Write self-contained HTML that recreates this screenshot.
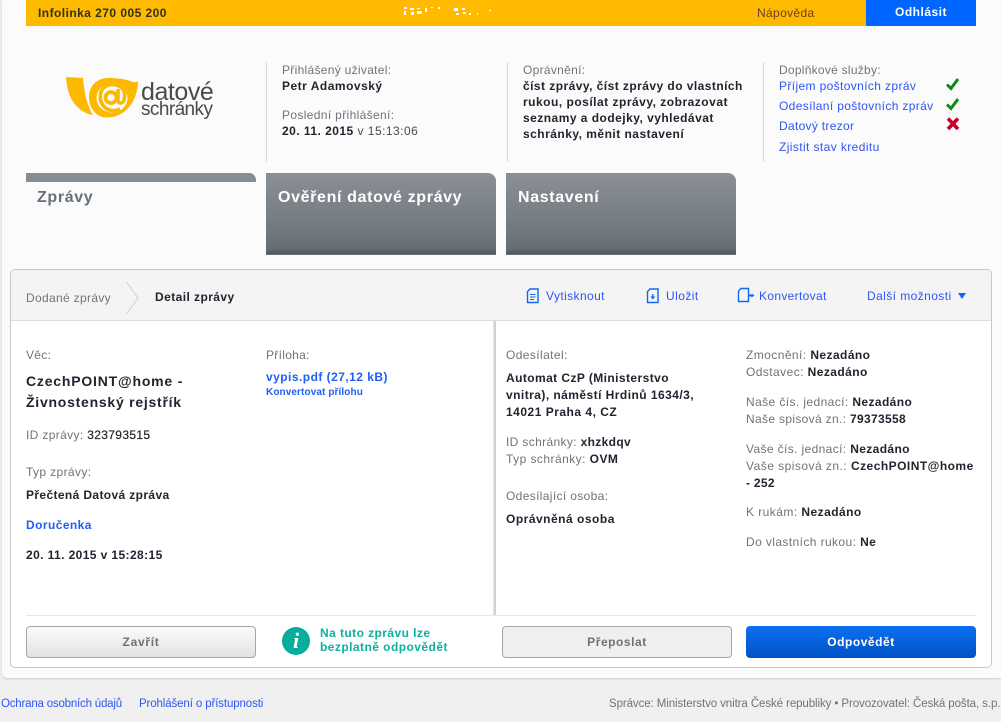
<!DOCTYPE html>
<html lang="cs"><head><meta charset="utf-8"><title>Datové schránky</title>
<style>
html,body{margin:0;padding:0;width:1001px;height:722px;overflow:hidden;background:#f0f0f0;font-family:"Liberation Sans",Arial,sans-serif;font-size:12px;color:#23232f}
#sheet{position:absolute;left:2px;top:0;width:999px;height:678px;background:#fbfbfb;box-shadow:0 1px 2px #ccc;border-radius:0 0 0 5px}
.a{position:absolute}
.t{position:absolute;white-space:nowrap;line-height:16px;height:16px}
.g{color:#6d747c}
.b{font-weight:bold;color:#23232f}
.l{color:#2f55f5}
.lb{color:#1f5ff5;font-weight:bold}
.tab{position:absolute;top:173px;width:230px;height:82px;border-radius:0 8px 0 0;background:linear-gradient(#8b9096,#6f767d 75%,#666d74 92%,#50565c 99%,#9a9ea2);color:#fff;font-weight:bold;font-size:16px;letter-spacing:.64px}
.tab span{position:absolute;left:12px;top:17px;line-height:16px;white-space:nowrap}
.btn{position:absolute;top:626px;width:228px;height:30px;border:1px solid #a5a5a9;border-radius:4px;text-align:center;line-height:30px;font-weight:bold;color:#6f7178;letter-spacing:.55px}
</style></head><body>
<div id="sheet"></div>

<div class="a" style="left:26px;top:0;width:840px;height:26px;background:#ffba00"></div>
<div class="a" style="left:866px;top:0;width:110px;height:26px;background:#0066ff;color:#fff;font-weight:bold;text-align:center;line-height:25px;letter-spacing:.5px">Odhlásit</div>
<div class="t" style="left:38px;top:5px;font-weight:bold;color:#2b3320;letter-spacing:.45px">Infolinka 270 005 200</div>
<div class="t" style="left:757px;top:5px;color:#6b3d20;letter-spacing:.35px">Nápověda</div>
<svg class="a" style="left:403px;top:6px" width="90" height="12" fill="#fff"><rect x="1" y="1" width="3" height="2"/><rect x="1" y="5" width="2" height="4"/><rect x="7" y="2" width="4" height="2"/><rect x="8" y="6" width="3" height="3"/><rect x="14" y="2" width="3" height="1"/><rect x="14" y="5" width="5" height="3"/><rect x="22" y="2" width="2" height="4"/><rect x="28" y="1" width="2" height="1"/><rect x="35" y="1" width="2" height="2"/><rect x="51" y="2" width="4" height="3"/><rect x="53" y="7" width="3" height="2"/><rect x="59" y="2" width="3" height="2"/><rect x="60" y="6" width="3" height="2"/><rect x="66" y="7" width="2" height="2"/><rect x="74" y="7" width="1" height="2"/><rect x="86" y="4" width="2" height="1"/></svg>

<!-- logo -->
<svg class="a" style="left:60px;top:70px" width="90" height="55" viewBox="60 70 90 55" fill="none">
<path d="M66 77L83 78C84 92 87 105 93 115C76 112 67 97 66 77Z" fill="#fcb900"/>
<path d="M130.500 81C133 83 138 82 138 81C138 100 126 117.500 107 117.500C96 117.500 89 108 89 97C89 86 97 78 108 78C117 78 124 79 130.500 81Z" fill="#fcb900"/>
<ellipse cx="112" cy="98" rx="15.500" ry="14.500" fill="#fbfbfb"/>
<circle cx="111" cy="97.500" r="5.500" stroke="#fcb900" stroke-width="3.800"/>
<path d="M118 89V100.500C118 104 123 104 124 100C126 92 123.500 87.500 118 85.500C110 82.500 102 86 100.500 94C99 103 105 110.500 113 110.500C116 110.500 118 110 120 109" stroke="#fcb900" stroke-width="3.600"/>
</svg>
<div class="t" style="left:141px;top:78px;font-size:25px;line-height:28px;height:28px;color:#4b4b4d;letter-spacing:-.45px">datové</div>
<div class="t" style="left:141px;top:99px;font-size:19px;line-height:22px;height:22px;color:#4b4b4d;letter-spacing:-.58px">schránky</div>

<!-- header dividers -->
<div class="a" style="left:266px;top:62px;width:1px;height:100px;background:#d8d8d8"></div>
<div class="a" style="left:507px;top:62px;width:1px;height:100px;background:#d8d8d8"></div>
<div class="a" style="left:763px;top:62px;width:1px;height:100px;background:#d8d8d8"></div>

<div class="t g" style="left:282px;top:62px;letter-spacing:.3px">Přihlášený uživatel:</div>
<div class="t b" style="left:282px;top:78px;letter-spacing:.5px">Petr Adamovský</div>
<div class="t g" style="left:282px;top:107px;letter-spacing:.35px">Poslední přihlášení:</div>
<div class="t" style="left:282px;top:123px;letter-spacing:.47px"><b>20. 11. 2015</b> <span style="color:#444b55">v 15:13:06</span></div>

<div class="t g" style="left:523px;top:62px;letter-spacing:.3px">Oprávnění:</div>
<div class="t b" style="left:523px;top:78px;letter-spacing:.45px">číst zprávy, číst zprávy do vlastních</div>
<div class="t b" style="left:523px;top:94px;letter-spacing:.5px">rukou, posílat zprávy, zobrazovat</div>
<div class="t b" style="left:523px;top:110px;letter-spacing:.47px">seznamy a dodejky, vyhledávat</div>
<div class="t b" style="left:523px;top:126px;letter-spacing:.48px">schránky, měnit nastavení</div>

<div class="t g" style="left:779px;top:62px;letter-spacing:.26px">Doplňkové služby:</div>
<div class="t l" style="left:779px;top:78px;letter-spacing:.37px">Příjem poštovních zpráv</div>
<div class="t l" style="left:779px;top:98px;letter-spacing:.35px">Odesílaní poštovních zpráv</div>
<div class="t l" style="left:779px;top:118px;letter-spacing:.3px">Datový trezor</div>
<div class="t l" style="left:779px;top:139px;letter-spacing:.4px">Zjistit stav kreditu</div>
<svg class="a" style="left:945px;top:77px" width="16" height="14"><path d="M2 7.500L6 11.500L13 2" fill="none" stroke="#0a8a12" stroke-width="3"/></svg>
<svg class="a" style="left:945px;top:97px" width="16" height="14"><path d="M2 7.500L6 11.500L13 2" fill="none" stroke="#0a8a12" stroke-width="3"/></svg>
<svg class="a" style="left:946px;top:117px" width="14" height="14"><path d="M2 1.500L12 12M12 1.500L2 12" fill="none" stroke="#c8002e" stroke-width="3.600"/></svg>

<!-- tabs -->
<div class="a" style="left:26px;top:173px;width:230px;height:9px;border-radius:0 7px 0 0;background:#878c92"></div>
<div class="t" style="left:37px;top:190px;font-size:16px;font-weight:bold;color:#68707c;letter-spacing:.64px">Zprávy</div>
<div class="tab" style="left:266px"><span>Ověření datové zprávy</span></div>
<div class="tab" style="left:506px"><span>Nastavení</span></div>

<!-- panel -->
<div class="a" style="left:10px;top:269px;width:980px;height:397px;border:1px solid #c8c8c8;border-radius:5px;background:#fff;overflow:hidden">
  <div class="a" style="left:0;top:0;width:980px;height:50px;background:#f4f4f4;border-bottom:1px solid #dedede"></div>
  <div class="a" style="left:482px;top:51px;width:3px;height:295px;background:linear-gradient(90deg,#e8e8e8,#c9c9c9)"></div>
  <div class="a" style="left:15px;top:345px;width:950px;height:1px;background:#e8e8e8"></div>
</div>
<svg class="a" style="left:125px;top:281px" width="16" height="34"><path d="M1.500 1L13 17L1.500 33" fill="none" stroke="#cfcfcf"/></svg>

<div class="t g" style="left:26px;top:290px;letter-spacing:.33px">Dodané zprávy</div>
<div class="t b" style="left:155px;top:289px;letter-spacing:.43px">Detail zprávy</div>

<svg class="a" style="left:526px;top:288px" width="14" height="16" fill="none" stroke="#1467f0" stroke-width="1.400"><path d="M4 1H12V14.500H1.500V3.500Z"/><path d="M4 6.500H9.500M4 9H9.500M4 11.500H8" stroke-width="1"/></svg>
<div class="t l" style="left:546px;top:288px;letter-spacing:.4px">Vytisknout</div>
<svg class="a" style="left:646px;top:288px" width="14" height="16" fill="none" stroke="#1467f0" stroke-width="1.400"><path d="M4 1H12V14.500H1.500V3.500Z"/><path d="M6.800 6V10M5 8.500L6.800 10.500L8.600 8.500" stroke-width="1.300"/></svg>
<div class="t l" style="left:666px;top:288px;letter-spacing:.45px">Uložit</div>
<svg class="a" style="left:737px;top:287px" width="18" height="16" fill="none" stroke="#1467f0" stroke-width="1.400"><path d="M4 1.500H11.500V14.500H1.500V4Z"/><path d="M11.500 8.500H15" stroke-width="2"/><path d="M14.500 6.500L17.500 8.500L14.500 10.500Z" fill="#1467f0" stroke="none"/></svg>
<div class="t l" style="left:759px;top:288px;letter-spacing:.33px">Konvertovat</div>
<div class="t l" style="left:867px;top:288px;letter-spacing:.42px">Další možnosti</div>
<svg class="a" style="left:957px;top:292px" width="10" height="8"><path d="M1 1H9L5 7Z" fill="#1467f0"/></svg>

<!-- left col -->
<div class="t g" style="left:26px;top:347px;letter-spacing:.3px">Věc:</div>
<div class="t b" style="left:26px;top:373px;font-size:14px;letter-spacing:.8px">CzechPOINT@home -</div>
<div class="t b" style="left:26px;top:394px;font-size:14px;letter-spacing:.75px">Živnostenský rejstřík</div>
<div class="t g" style="left:26px;top:427px;letter-spacing:.35px">ID zprávy: <span style="color:#23232f;font-weight:normal;-webkit-text-stroke:.2px #23232f">323793515</span></div>
<div class="t g" style="left:26px;top:464px;letter-spacing:.37px">Typ zprávy:</div>
<div class="t b" style="left:26px;top:487px;letter-spacing:.37px">Přečtená Datová zpráva</div>
<div class="t lb" style="left:26px;top:517px;letter-spacing:.43px">Doručenka</div>
<div class="t b" style="left:26px;top:547px;letter-spacing:.4px">20. 11. 2015 v 15:28:15</div>

<div class="t g" style="left:266px;top:347px;letter-spacing:.3px">Příloha:</div>
<div class="t lb" style="left:266px;top:369px;letter-spacing:.46px">vypis.pdf (27,12 kB)</div>
<div class="t lb" style="left:266px;top:385px;font-size:10px;letter-spacing:.1px">Konvertovat přílohu</div>

<!-- middle col -->
<div class="t g" style="left:506px;top:347px;letter-spacing:.4px">Odesílatel:</div>
<div class="t b" style="left:506px;top:370px;letter-spacing:.42px">Automat CzP (Ministerstvo</div>
<div class="t b" style="left:506px;top:387px;letter-spacing:.45px">vnitra), náměstí Hrdinů 1634/3,</div>
<div class="t b" style="left:506px;top:404px;letter-spacing:.5px">14021 Praha 4, CZ</div>
<div class="t g" style="left:506px;top:434px;letter-spacing:.35px">ID schránky: <b class="b">xhzkdqv</b></div>
<div class="t g" style="left:506px;top:451px;letter-spacing:.45px">Typ schránky: <b class="b">OVM</b></div>
<div class="t g" style="left:506px;top:488px;letter-spacing:.35px">Odesílající osoba:</div>
<div class="t b" style="left:506px;top:511px;letter-spacing:.5px">Oprávněná osoba</div>

<!-- right col -->
<div class="t g" style="left:746px;top:347px;letter-spacing:.43px">Zmocnění: <b class="b">Nezadáno</b></div>
<div class="t g" style="left:746px;top:364px;letter-spacing:.43px">Odstavec: <b class="b">Nezadáno</b></div>
<div class="t g" style="left:746px;top:394px;letter-spacing:.4px">Naše čís. jednací: <b class="b">Nezadáno</b></div>
<div class="t g" style="left:746px;top:411px;letter-spacing:.33px">Naše spisová zn.: <b class="b">79373558</b></div>
<div class="t g" style="left:746px;top:441px;letter-spacing:.37px">Vaše čís. jednací: <b class="b">Nezadáno</b></div>
<div class="t g" style="left:746px;top:458px;letter-spacing:.47px">Vaše spisová zn.: <b class="b">CzechPOINT@home</b></div>
<div class="t b" style="left:746px;top:475px;letter-spacing:.3px">- 252</div>
<div class="t g" style="left:746px;top:504px;letter-spacing:.45px">K rukám: <b class="b">Nezadáno</b></div>
<div class="t g" style="left:746px;top:534px;letter-spacing:.4px">Do vlastních rukou: <b class="b">Ne</b></div>

<!-- buttons -->
<div class="btn" style="left:26px;background:linear-gradient(#fbfbfb,#e3e3e3);letter-spacing:.7px">Zavřít</div>
<div class="a" style="left:282px;top:627px;width:28px;height:28px;border-radius:50%;background:#06ad9d;color:#fff;text-align:center;font:italic bold 22px/28px 'Liberation Serif',serif">i</div>
<div class="t" style="left:320px;top:626px;font-weight:bold;color:#0cb0a0;letter-spacing:.43px;line-height:15px;height:15px">Na tuto zprávu lze</div>
<div class="t" style="left:320px;top:640px;font-weight:bold;color:#0cb0a0;letter-spacing:.45px;line-height:15px;height:15px">bezplatně odpovědět</div>
<div class="btn" style="left:502px;background:#efefef">Přeposlat</div>
<div class="btn" style="left:746px;width:230px;height:32px;border:0;line-height:32px;color:#fff;background:linear-gradient(#0a70f2,#0052c4)">Odpovědět</div>

<!-- footer -->
<div class="t l" style="left:1px;top:696px;font-size:11.500px;letter-spacing:-.2px">Ochrana osobních údajů</div>
<div class="t l" style="left:139px;top:696px;font-size:11.500px;letter-spacing:-.12px">Prohlášení o přístupnosti</div>
<div class="t g" style="left:609px;top:696px;font-size:11.500px;letter-spacing:-.09px">Správce: Ministerstvo vnitra České republiky • Provozovatel: Česká pošta, s.p.</div>
</body></html>
